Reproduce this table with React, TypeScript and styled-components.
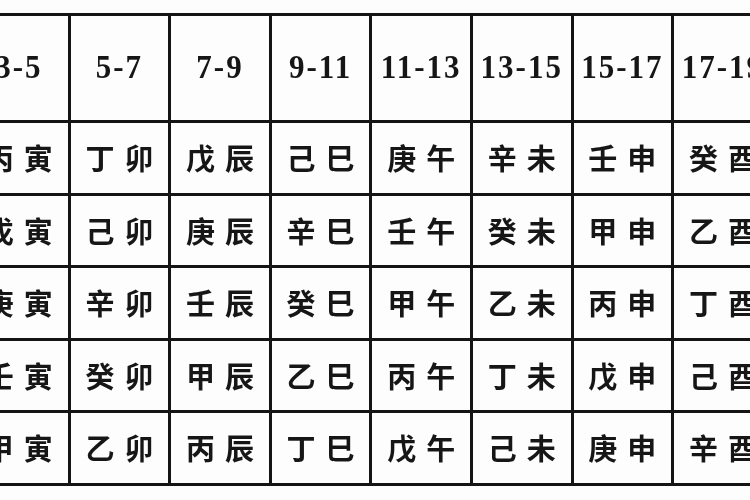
import React from 'react';
import styled, { createGlobalStyle } from 'styled-components';

const GlobalStyle = createGlobalStyle`
  html, body {
    margin: 0;
    padding: 0;
    background: #fff;
  }
`;

const hours = ['3-5', '5-7', '7-9', '9-11', '11-13', '13-15', '15-17', '17-19'];

const rows: string[][] = [
  ['丙寅', '丁卯', '戊辰', '己巳', '庚午', '辛未', '壬申', '癸酉'],
  ['戊寅', '己卯', '庚辰', '辛巳', '壬午', '癸未', '甲申', '乙酉'],
  ['庚寅', '辛卯', '壬辰', '癸巳', '甲午', '乙未', '丙申', '丁酉'],
  ['壬寅', '癸卯', '甲辰', '乙巳', '丙午', '丁未', '戊申', '己酉'],
  ['甲寅', '乙卯', '丙辰', '丁巳', '戊午', '己未', '庚申', '辛酉'],
];

const Page = styled.div`
  width: 750px;
  height: 500px;
  overflow: hidden;
  background: #fdfdfd;
  padding-top: 13px;
  box-sizing: border-box;
`;

// the black gaps between white cells are the ruled lines of the printed table
const Table = styled.div`
  display: grid;
  grid-template-columns: repeat(8, 97.6px);
  grid-template-rows: 104px repeat(5, 69.5px);
  gap: 3px;
  width: max-content;
  margin-left: -33px;
  background: #141414;
  border: 3px solid #141414;
  filter: blur(0.35px);
`;

const Cell = styled.div<{ $head?: boolean }>`
  background: #fdfdfd;
  display: flex;
  align-items: center;
  justify-content: center;
  gap: 10px;
  color: #161616;
  font-family: ${({ $head }) =>
    $head ? '"Liberation Serif", "DejaVu Serif", serif' : '"Noto Sans CJK SC", "Noto Sans CJK TC", sans-serif'};
  font-size: ${({ $head }) => ($head ? '31px' : '29px')};
  font-weight: 700;
  letter-spacing: ${({ $head }) => ($head ? '2px' : '0')};
  padding-bottom: ${({ $head }) => ($head ? '2px' : '0')};
`;

const Glyph = styled.span`
  display: block;
  line-height: 1;
`;

const Digits = styled.span`
  display: block;
  transform: scaleY(1.12);
`;

export default function App() {
  return (
    <Page>
      <GlobalStyle />
      <Table>
        {hours.map((h) => (
          <Cell $head key={h}>
            <Digits>{h}</Digits>
          </Cell>
        ))}
        {rows.map((row, r) =>
          row.map((pair, c) => (
            <Cell key={`${r}-${c}`}>
              {pair.split('').map((ch, i) => (
                <Glyph key={i}>{ch}</Glyph>
              ))}
            </Cell>
          ))
        )}
      </Table>
    </Page>
  );
}
